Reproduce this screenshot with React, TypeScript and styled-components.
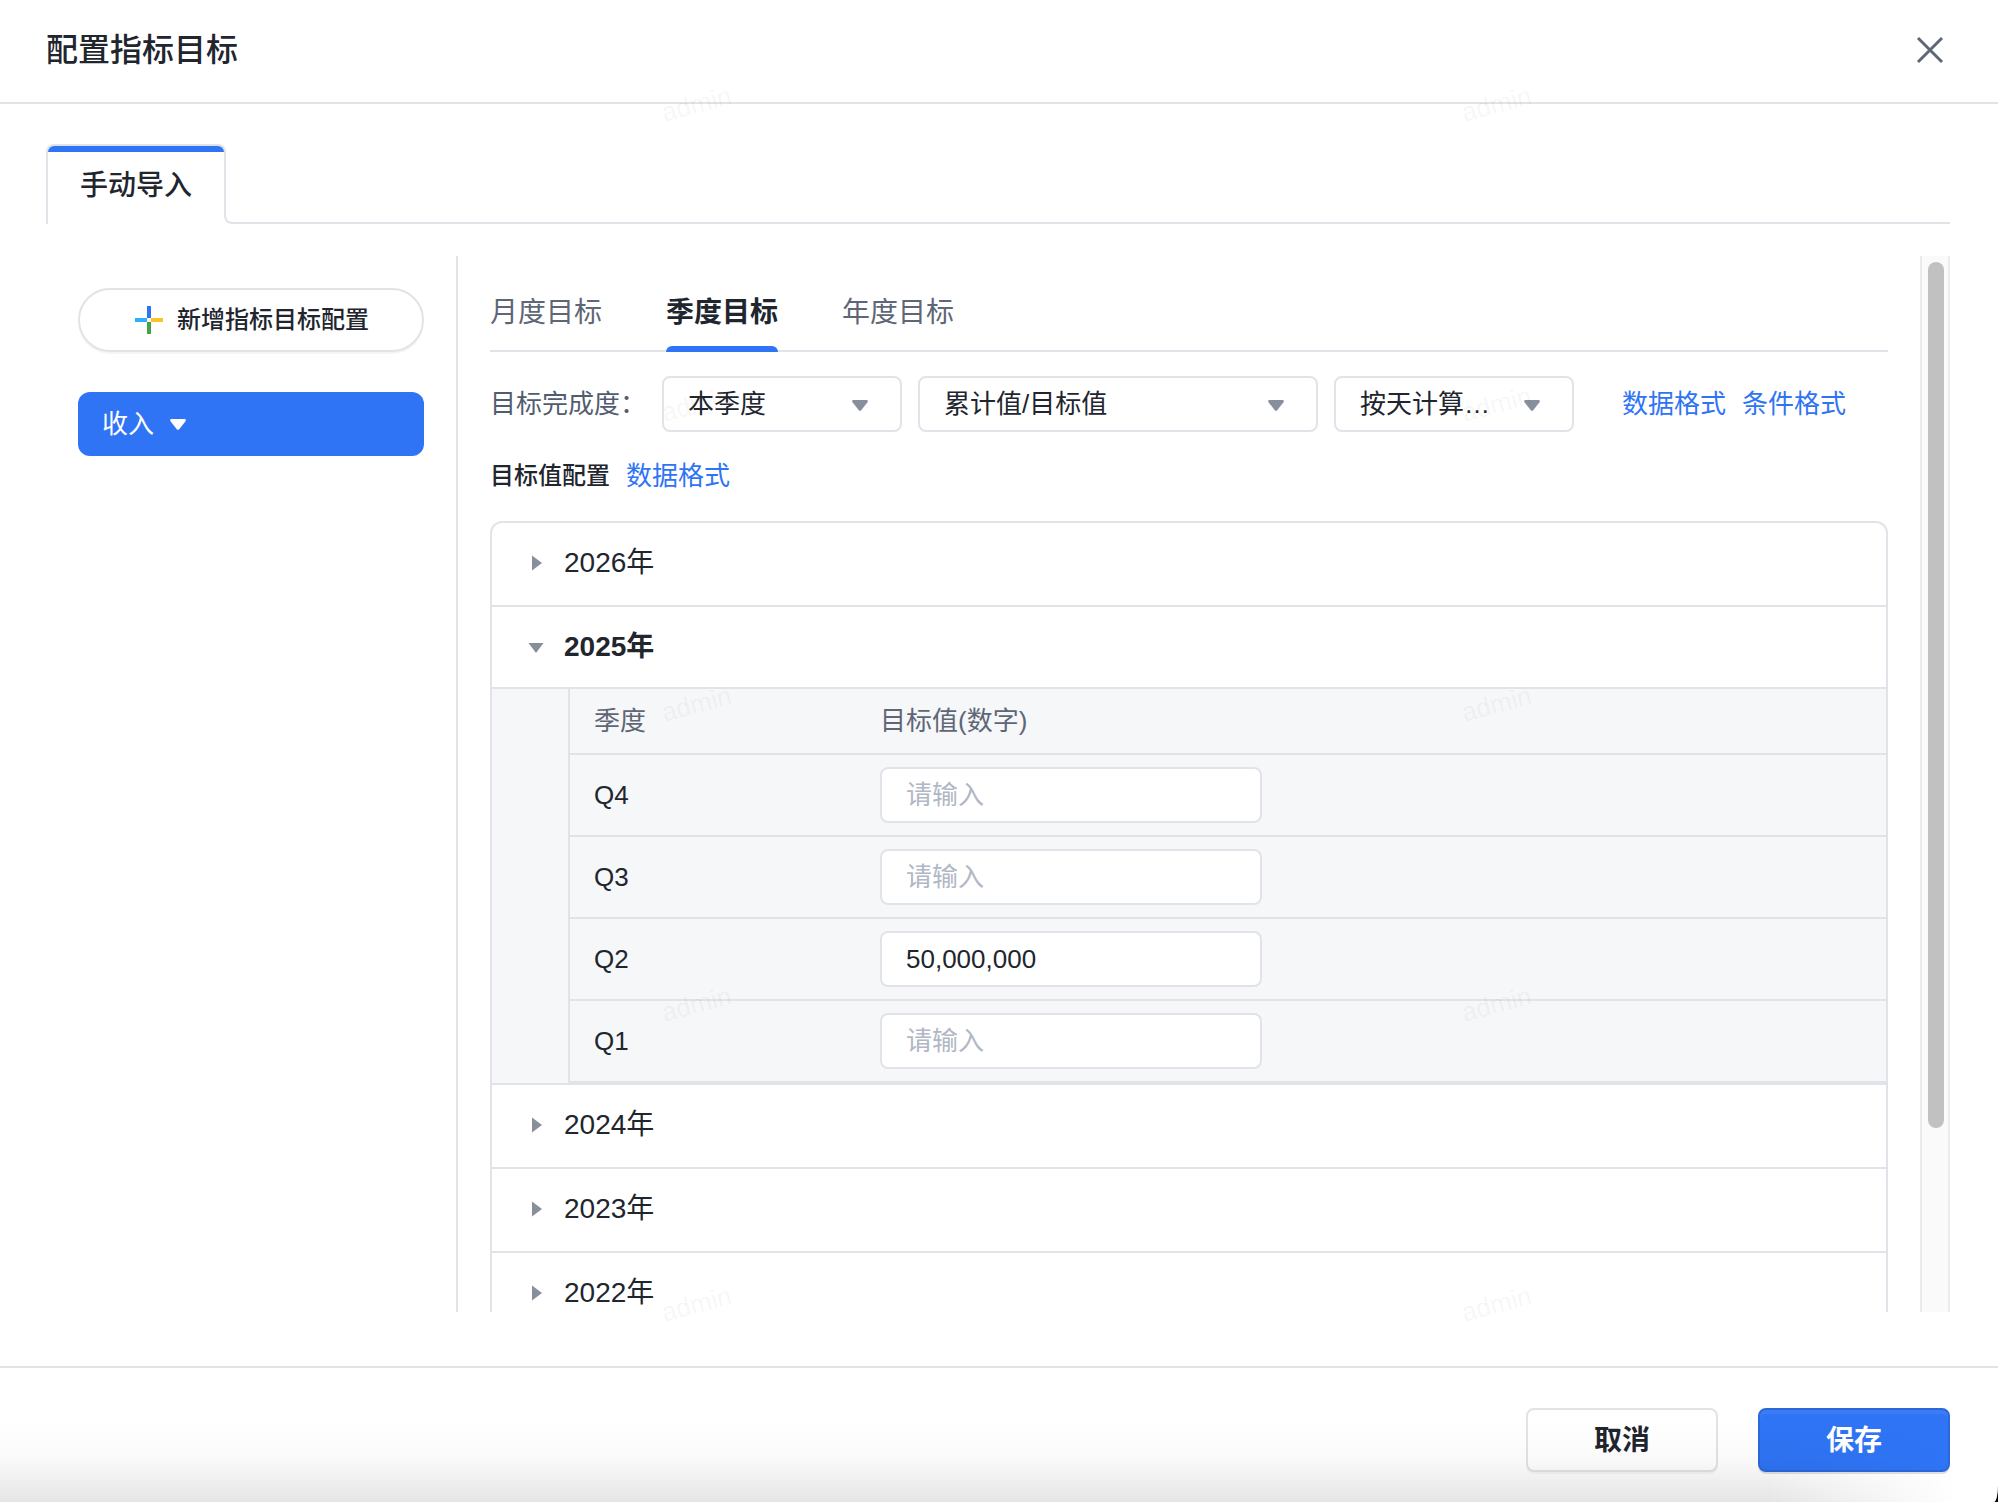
import React, { useEffect, useRef, useState } from "react";
import styled, { createGlobalStyle, css } from "styled-components";

const color = {
  text: "#21252e",
  muted: "#5f6675",
  label: "#525c6f",
  placeholder: "#b1b7c4",
  caret: "#878f9d",
  line: "#e2e3e9",
  blue: "#2f74f4",
  panel: "#f5f7f9",
};

const GlobalStyle = createGlobalStyle`
  * { box-sizing: border-box; }
  body { margin: 0; background: #000; }
  body, button, input, select {
    font-family: "Liberation Sans", "Noto Sans CJK SC", sans-serif;
    color: ${color.text};
  }
  button { margin: 0; padding: 0; border: 0; background: none; cursor: pointer; }
`;

const Dialog = styled.section`
  position: relative;
  display: flex;
  flex-direction: column;
  height: 100vh;
  overflow: hidden;
  border-bottom-right-radius: 4px 16px;
  background: #fff;
`;

const Header = styled.header`
  display: flex;
  align-items: center;
  justify-content: space-between;
  padding: 26px 54px 28px 46px;
  border-bottom: 2px solid ${color.line};
`;

const Title = styled.h1`
  margin: 0;
  font-size: 32px;
  line-height: 48px;
  font-weight: 500;
`;

const CloseButton = styled.button`
  display: flex;
  svg { display: block; }
`;

const Body = styled.main`
  flex: 1;
  min-height: 0;
  display: flex;
  flex-direction: column;
  gap: 32px;
  padding: 40px 48px 54px 46px;
`;

const ImportTabs = styled.div`
  display: flex;
  height: 80px;
`;

const ImportTab = styled.button`
  position: relative;
  height: 72px;
  padding: 10px 32px 0;
  border: 2px solid ${color.line};
  border-bottom: 0;
  border-radius: 8px 8px 0 0;
  font-size: 28px;
  line-height: 40px;
  font-weight: 500;
  &::before {
    content: "";
    position: absolute;
    left: -2px;
    top: 100%;
    width: 2px;
    height: 8px;
    background: ${color.line};
  }
  &::after {
    content: "";
    position: absolute;
    inset: 0 0 auto;
    height: 12px;
    border-top: 6px solid ${color.blue};
    border-radius: 6px 6px 0 0;
  }
`;

const ImportTabsLine = styled.div`
  flex: 1;
  align-self: flex-end;
  height: 8px;
  margin-left: -2px;
  border-left: 2px solid ${color.line};
  border-bottom: 2px solid ${color.line};
  border-bottom-left-radius: 8px;
`;

const Columns = styled.div`
  flex: 1;
  min-height: 0;
  display: flex;
`;

const Sidebar = styled.aside`
  flex: none;
  width: 412px;
  display: flex;
  flex-direction: column;
  gap: 40px;
  padding: 32px;
  border-right: 2px solid ${color.line};
`;

const AddButton = styled.button`
  display: flex;
  align-items: center;
  justify-content: center;
  gap: 14px;
  height: 64px;
  padding-left: 2px;
  border: 2px solid #e3e3e3;
  border-radius: 32px;
  box-shadow: 0 2px 0 rgba(0, 0, 0, 0.04);
  font-size: 24px;
  line-height: 36px;
  font-weight: 500;
`;

const MetricButton = styled.button`
  display: flex;
  align-items: center;
  gap: 16px;
  height: 64px;
  padding: 0 24px;
  border-radius: 12px;
  background: ${color.blue};
  color: #fff;
  font-size: 26px;
  line-height: 40px;
`;

const ScrollArea = styled.div`
  flex: 1;
  min-width: 0;
  overflow-y: auto;
  scrollbar-width: none;
  padding: 0 32px 192px;
`;

const ScrollTrack = styled.div`
  flex: none;
  width: 30px;
  padding: 6px;
  border: 0 solid #ebebeb;
  border-width: 0 2px;
  background: #fafafa;
`;

const ScrollThumb = styled.div`
  width: 16px;
  border-radius: 8px;
  background: #c1c1c1;
`;

const PeriodTabs = styled.div`
  display: flex;
  gap: 64px;
  padding-top: 32px;
  border-bottom: 2px solid ${color.line};
`;

const PeriodTab = styled.button<{ $active: boolean }>`
  position: relative;
  padding-bottom: 12px;
  font-size: 28px;
  line-height: 50px;
  color: ${color.muted};
  ${(p) =>
    p.$active &&
    css`
      color: ${color.text};
      font-weight: 600;
      &::after {
        content: "";
        position: absolute;
        left: 0;
        right: 0;
        bottom: -2px;
        height: 6px;
        border-radius: 6px 6px 0 0;
        background: ${color.blue};
      }
    `}
`;

const FormRow = styled.div`
  display: flex;
  align-items: center;
  gap: 16px;
  margin-top: 24px;
  font-size: 26px;
  line-height: 40px;
`;

const FieldLabel = styled.label`
  color: ${color.label};
`;

const SelectBox = styled.span<{ $wide?: boolean }>`
  position: relative;
  width: ${(p) => (p.$wide ? 400 : 240)}px;
  svg {
    position: absolute;
    right: 34px;
    top: 24px;
    pointer-events: none;
  }
`;

const Select = styled.select`
  display: block;
  width: 100%;
  height: 56px;
  padding: 0 56px 0 24px;
  border: 2px solid ${color.line};
  border-radius: 8px;
  background: #fff;
  appearance: none;
  font-size: 26px;
`;

const Links = styled.div`
  display: flex;
  gap: 16px;
  margin-left: 32px;
`;

const Link = styled.a`
  color: ${color.blue};
  text-decoration: none;
`;

const SectionTitle = styled.h2`
  margin: 0;
  font-size: 24px;
  font-weight: 500;
`;

const YearList = styled.div`
  margin-top: 25px;
  border: 2px solid ${color.line};
  border-radius: 12px;
`;

const YearItem = styled.section`
  border-bottom: 2px solid ${color.line};
  &:last-child { border-bottom: 0; }
`;

const YearButton = styled.button<{ $open: boolean }>`
  display: flex;
  align-items: center;
  gap: 20px;
  width: 100%;
  height: 82px;
  padding-left: 36px;
  border-bottom: 2px solid ${(p) => (p.$open ? color.line : "transparent")};
  font-size: 28px;
  line-height: 40px;
  font-weight: ${(p) => (p.$open ? 600 : 400)};
`;

const YearPanel = styled.div`
  padding-left: 76px;
  background: ${color.panel};
`;

const Table = styled.table`
  width: 100%;
  border-left: 2px solid ${color.line};
  border-spacing: 0;
  table-layout: fixed;
  font-size: 26px;
  line-height: 40px;
  th, td {
    padding: 12px 0;
    border-bottom: 2px solid ${color.line};
    text-align: left;
    font-weight: 400;
  }
  thead th { color: ${color.muted}; }
  th:first-child {
    width: 310px;
    padding-left: 24px;
  }
`;

const ValueInput = styled.input`
  display: block;
  width: 382px;
  height: 56px;
  padding: 0 24px;
  border: 2px solid ${color.line};
  border-radius: 8px;
  background: #fff;
  font-size: 26px;
  &::placeholder { color: ${color.placeholder}; opacity: 1; }
`;

const Footer = styled.footer`
  position: relative;
  display: flex;
  justify-content: flex-end;
  gap: 40px;
  padding: 40px 48px 30px;
  border-top: 2px solid ${color.line};
  &::after {
    content: "";
    position: absolute;
    inset: auto 0 0;
    height: 80px;
    background: linear-gradient(to bottom, rgba(0, 0, 0, 0), rgba(0, 0, 0, 0.02) 45%, rgba(0, 0, 0, 0.1));
    mask-image: linear-gradient(to right, #000 calc(100% - 230px), transparent calc(100% - 40px));
    pointer-events: none;
  }
`;

const FooterButton = styled.button<{ $primary?: boolean }>`
  width: 192px;
  height: 64px;
  padding-top: 2px;
  border: 2px solid ${(p) => (p.$primary ? "#2b68dc" : "#e3e3e3")};
  border-radius: 8px;
  background: ${(p) => (p.$primary ? color.blue : "#fff")};
  box-shadow: 0 2px 0 ${(p) => (p.$primary ? "rgba(0, 0, 0, 0.12)" : "rgba(0, 0, 0, 0.04)")}
    ${(p) => p.$primary && ", inset 0 4px 0 rgba(255, 255, 255, 0.06)"};
  color: ${(p) => (p.$primary ? "#fff" : color.text)};
  font-size: 28px;
  line-height: 40px;
  font-weight: 600;
`;

const WatermarkLayer = styled.div`
  position: absolute;
  inset: 0;
  display: grid;
  grid-template-columns: repeat(auto-fill, 800px);
  grid-auto-rows: 300px;
  padding-left: 296px;
  overflow: hidden;
  pointer-events: none;
`;

const Watermark = styled.span`
  justify-self: center;
  align-self: start;
  margin-top: 90px;
  font-size: 26px;
  line-height: 28px;
  color: rgba(0, 0, 0, 0.05);
  transform: rotate(-15deg);
`;

const PlusIcon = () => (
  <svg width="28" height="28" viewBox="0 0 28 28" aria-hidden="true">
    <path d="M12 0h4v12h-4z" fill="#2f74f4" />
    <path d="M16 12h12v4H16z" fill="#ffc226" />
    <path d="M12 16h4v12h-4z" fill="#43a441" />
    <path d="M0 12h12v4H0z" fill="#2fb0ff" />
  </svg>
);

const CloseIcon = () => (
  <svg width="28" height="28" viewBox="0 0 28 28" aria-hidden="true">
    <path d="M2 2l24 24M26 2L2 26" stroke="#5f6675" strokeWidth="3" />
  </svg>
);

const DownCaret = ({ fill = color.caret }: { fill?: string }) => (
  <svg width="16" height="11" viewBox="0 0 16 11" aria-hidden="true">
    <path d="M1.6 0h12.8c1.3 0 1.9 1.2 1.1 2.2L9.2 10.2c-.6.8-1.8.8-2.4 0L.5 2.2C-.3 1.2.3 0 1.6 0z" fill={fill} />
  </svg>
);

const YearCaret = ({ open }: { open: boolean }) => (
  <svg width="16" height="16" viewBox="0 0 16 16" aria-hidden="true">
    <path d={open ? "M.5 4h15L8 14z" : "M4 .5L14 8 4 15.5z"} fill={color.caret} />
  </svg>
);

const PERIODS = ["月度目标", "季度目标", "年度目标"];
const YEARS = [2026, 2025, 2024, 2023, 2022];
const QUARTERS = ["Q4", "Q3", "Q2", "Q1"];
const TRACK_PADDING = 12;

export default function App() {
  const [period, setPeriod] = useState(PERIODS[1]);
  const [openYear, setOpenYear] = useState<number | null>(2025);
  const [values, setValues] = useState<Record<string, string>>({ Q2: "50,000,000" });
  const [thumb, setThumb] = useState({ height: 0, top: 0 });
  const areaRef = useRef<HTMLDivElement>(null);

  const updateThumb = () => {
    const area = areaRef.current;
    if (!area) return;
    const scale = (area.clientHeight - TRACK_PADDING) / area.scrollHeight;
    setThumb({ height: Math.round(area.clientHeight * scale), top: Math.round(area.scrollTop * scale) });
  };

  useEffect(() => {
    updateThumb();
    window.addEventListener("resize", updateThumb);
    return () => window.removeEventListener("resize", updateThumb);
  }, [openYear]);

  return (
    <>
      <GlobalStyle />
      <Dialog role="dialog" aria-labelledby="dialog-title">
        <Header>
          <Title id="dialog-title">配置指标目标</Title>
          <CloseButton type="button" aria-label="关闭">
            <CloseIcon />
          </CloseButton>
        </Header>

        <Body>
          <ImportTabs>
            <ImportTab type="button">手动导入</ImportTab>
            <ImportTabsLine />
          </ImportTabs>

          <Columns>
            <Sidebar>
              <AddButton type="button">
                <PlusIcon />
                新增指标目标配置
              </AddButton>
              <MetricButton type="button">
                收入
                <DownCaret fill="#fff" />
              </MetricButton>
            </Sidebar>

            <ScrollArea ref={areaRef} onScroll={updateThumb}>
              <PeriodTabs role="tablist">
                {PERIODS.map((name) => (
                  <PeriodTab
                    key={name}
                    type="button"
                    role="tab"
                    aria-selected={name === period}
                    $active={name === period}
                    onClick={() => setPeriod(name)}
                  >
                    {name}
                  </PeriodTab>
                ))}
              </PeriodTabs>

              <FormRow>
                <FieldLabel htmlFor="range">目标完成度：</FieldLabel>
                <SelectBox>
                  <Select id="range">
                    <option>本季度</option>
                  </Select>
                  <DownCaret />
                </SelectBox>
                <SelectBox $wide>
                  <Select aria-label="计算方式">
                    <option>累计值/目标值</option>
                  </Select>
                  <DownCaret />
                </SelectBox>
                <SelectBox>
                  <Select aria-label="计算粒度">
                    <option>按天计算…</option>
                  </Select>
                  <DownCaret />
                </SelectBox>
                <Links>
                  <Link href="#data-format">数据格式</Link>
                  <Link href="#condition-format">条件格式</Link>
                </Links>
              </FormRow>

              <FormRow>
                <SectionTitle>目标值配置</SectionTitle>
                <Link href="#value-format">数据格式</Link>
              </FormRow>

              <YearList>
                {YEARS.map((year) => {
                  const open = year === openYear;
                  return (
                    <YearItem key={year}>
                      <YearButton
                        type="button"
                        aria-expanded={open}
                        $open={open}
                        onClick={() => setOpenYear(open ? null : year)}
                      >
                        <YearCaret open={open} />
                        {year}年
                      </YearButton>
                      {open && (
                        <YearPanel>
                          <Table>
                            <thead>
                              <tr>
                                <th scope="col">季度</th>
                                <th scope="col">目标值(数字)</th>
                              </tr>
                            </thead>
                            <tbody>
                              {QUARTERS.map((q) => (
                                <tr key={q}>
                                  <th scope="row">
                                    <label htmlFor={`value-${q}`}>{q}</label>
                                  </th>
                                  <td>
                                    <ValueInput
                                      id={`value-${q}`}
                                      type="text"
                                      placeholder="请输入"
                                      value={values[q] ?? ""}
                                      onChange={(e) => setValues({ ...values, [q]: e.target.value })}
                                    />
                                  </td>
                                </tr>
                              ))}
                            </tbody>
                          </Table>
                        </YearPanel>
                      )}
                    </YearItem>
                  );
                })}
              </YearList>
            </ScrollArea>

            <ScrollTrack aria-hidden="true">
              <ScrollThumb style={{ height: thumb.height, marginTop: thumb.top }} />
            </ScrollTrack>
          </Columns>
        </Body>

        <Footer>
          <FooterButton type="button">取消</FooterButton>
          <FooterButton type="button" $primary>
            保存
          </FooterButton>
        </Footer>

        <WatermarkLayer aria-hidden="true">
          {Array.from({ length: 10 }, (_, i) => (
            <Watermark key={i}>admin</Watermark>
          ))}
        </WatermarkLayer>
      </Dialog>
    </>
  );
}
